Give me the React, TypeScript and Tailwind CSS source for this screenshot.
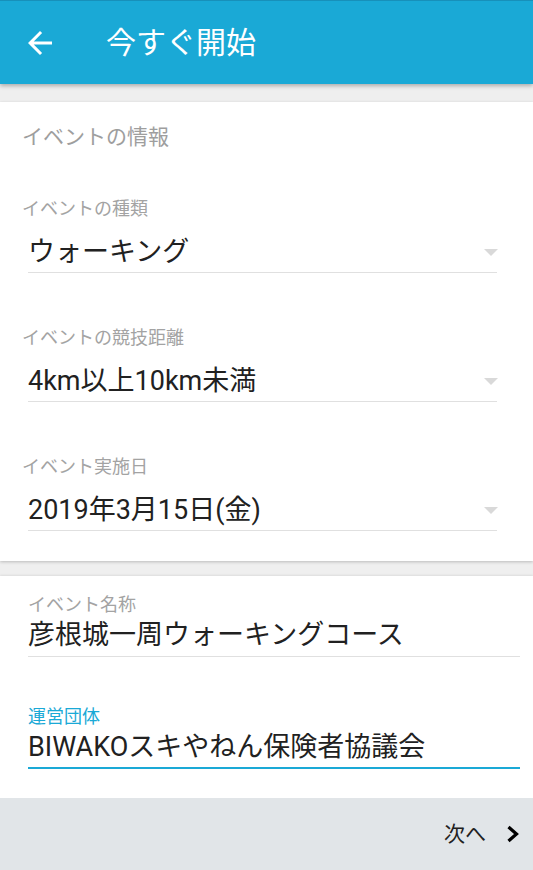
import React from 'react';

const FONT = "font-['Roboto','Noto_Sans_CJK_JP',sans-serif]";

function Spinner({ label, value, first }: { label: string; value: string; first?: boolean }) {
  return (
    <div className={first ? 'mt-[46px]' : 'mt-[53px]'}>
      <div className="text-[18px] leading-[24px] text-[#a3a3a3]">{label}</div>
      <div className="ml-[6px] mt-[14px] flex items-center justify-between border-b border-[#e0e0e0] pb-[3px]">
        <span className="text-[27px] leading-[34px] text-[#212121]">{value}</span>
        <svg width="14" height="7" viewBox="0 0 14 7" className="mr-[-1px]">
          <path d="M0 0h14L7 7z" fill="#d9d9d9" />
        </svg>
      </div>
    </div>
  );
}

export default function App() {
  return (
    <div className={`w-[533px] h-[870px] flex flex-col bg-[#efefef] overflow-hidden ${FONT}`}>
      <header className="relative z-10 h-[84px] shrink-0 flex items-center border-t border-[#1790ba] bg-[#1aa9d6] shadow-[0_2px_4px_rgba(0,0,0,0.28)]">
        <svg width="36" height="36" viewBox="0 0 24 24" className="ml-[22px]">
          <path d="M20 11H7.83l5.59-5.59L12 4l-8 8 8 8 1.41-1.41L7.83 13H20v-2z" fill="#fff" />
        </svg>
        <h1 className="ml-[48px] text-[30px] leading-[36px] text-white">今すぐ開始</h1>
      </header>

      <div className="h-[18px] shrink-0" />

      <section className="h-[459px] shrink-0 bg-white px-[22px] pt-[21px] pr-[36px] shadow-[0_1px_3px_rgba(0,0,0,0.22)]">
        <div className="text-[21px] leading-[28px] text-[#9e9e9e]">イベントの情報</div>
        <Spinner first label="イベントの種類" value="ウォーキング" />
        <Spinner label="イベントの競技距離" value="4km以上10km未満" />
        <Spinner label="イベント実施日" value="2019年3月15日(金)" />
      </section>

      <div className="h-[15px] shrink-0" />

      <section className="h-[222px] shrink-0 bg-white pl-[28px] pr-[13px] pt-[17px] shadow-[0_-1px_2px_rgba(0,0,0,0.08)]">
        <div className="text-[18px] leading-[24px] text-[#a3a3a3]">イベント名称</div>
        <div className="mt-[1px] border-b border-[#e0e0e0] pb-[4px] text-[27px] leading-[34px] text-[#212121]">
          彦根城一周ウォーキングコース
        </div>
        <div className="mt-[48px] text-[18px] leading-[24px] text-[#1aa9d6]">運営団体</div>
        <div className="mt-[1px] border-b-2 border-[#1aa9d6] pb-[3px] text-[27px] leading-[34px] text-[#212121]">
          BIWAKOスキやねん保険者協議会
        </div>
      </section>

      <footer className="h-[72px] shrink-0 flex items-center justify-end bg-[#e1e5e8] pr-[13px]">
        <span className="text-[21px] leading-[28px] text-[#212121]">次へ</span>
        <svg width="14" height="18" viewBox="0 0 14 18" className="ml-[20px]">
          <path d="M2.5 2L10.5 9L2.5 16" fill="none" stroke="#000" strokeWidth="3.2" />
        </svg>
      </footer>
    </div>
  );
}
